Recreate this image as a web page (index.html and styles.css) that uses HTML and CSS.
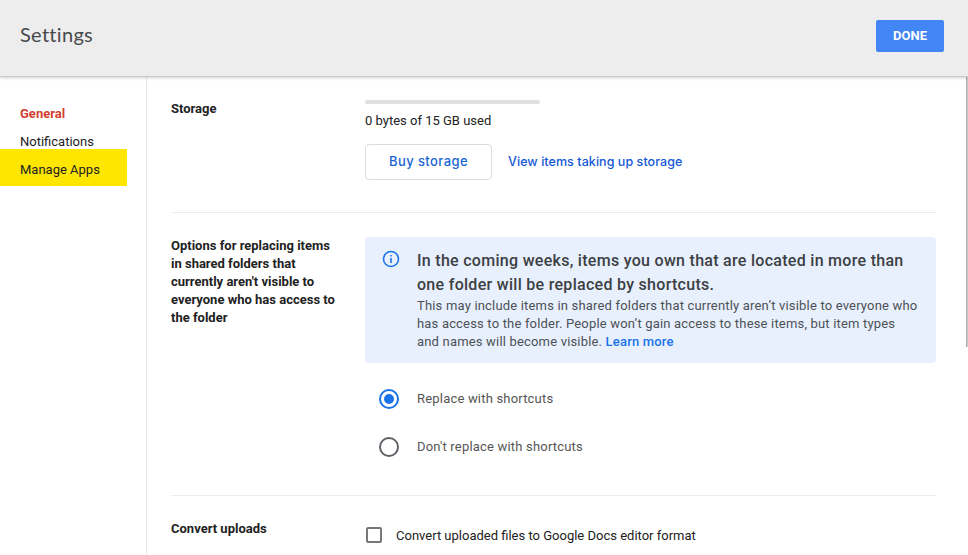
FILE: index.html
```html
<!DOCTYPE html>
<html lang="en">
<head>
<meta charset="utf-8">
<title>Settings</title>
<link rel="stylesheet" href="styles.css">
</head>
<body>
<header class="header">
  <h1 class="title">Settings</h1>
  <button class="done">DONE</button>
</header>
<div class="body">
  <nav class="nav">
    <a class="nav-item active"><span>General</span></a>
    <a class="nav-item"><span>Notifications</span></a>
    <a class="nav-item marked"><span>Manage Apps</span></a>
  </nav>
  <main class="content">
    <section class="row storage">
      <h2 class="label"><span>Storage</span></h2>
      <div class="field">
        <div class="meter"></div>
        <p class="usage"><span>0 bytes of 15 GB used</span></p>
        <div class="actions">
          <button class="buy"><span>Buy storage</span></button>
          <a class="view"><span>View items taking up storage</span></a>
        </div>
      </div>
    </section>
    <section class="row options">
      <h2 class="label">Options for replacing items<br>in shared folders that<br>currently aren't visible to<br>everyone who has access to<br>the folder</h2>
      <div class="field">
        <div class="notice">
          <svg class="info" width="18" height="18" viewBox="0 0 18 18" fill="none">
            <circle cx="9" cy="9" r="7.5" stroke="#1a73e8" stroke-width="1.6"/>
            <path d="M9 8v5M9 5v1.6" stroke="#1a73e8" stroke-width="1.6"/>
          </svg>
          <div class="notice-text">
            <h3 class="notice-title">In the coming weeks, items you own that are located in more than<br>one folder will be replaced by shortcuts.</h3>
            <p class="notice-copy">This may include items in shared folders that currently aren’t visible to everyone who<br>has access to the folder. People won’t gain access to these items, but item types<br>and names will become visible. <a class="learn">Learn more</a></p>
          </div>
        </div>
        <div class="radio checked"><i class="dot"></i><span>Replace with shortcuts</span></div>
        <div class="radio"><i class="dot"></i><span>Don't replace with shortcuts</span></div>
      </div>
    </section>
    <section class="row convert">
      <h2 class="label"><span>Convert uploads</span></h2>
      <div class="field check"><i class="box"></i><span>Convert uploaded files to Google Docs editor format</span></div>
    </section>
  </main>
  <div class="scroll"></div>
</div>
</body>
</html>
```

FILE: styles.css
```css
* { box-sizing: border-box; }
body {
  margin: 0;
  width: 968px;
  height: 555px;
  overflow: hidden;
  display: flex;
  flex-direction: column;
  background: #fff;
  color: #222;
  font: 13px/18px Roboto, "Liberation Sans", sans-serif;
}
h1, h2, h3, p { margin: 0; }
button { font: inherit; padding: 0; }
.header {
  position: relative;
  flex: none;
  height: 77px;
  padding: 0 24px 6px 20px;
  display: flex;
  align-items: center;
  justify-content: space-between;
  background: #ededed;
  border-bottom: 1px solid #cbcbcb;
  box-shadow: 0 1px 3px rgba(0, 0, 0, .18);
}
.title { margin-bottom: 2px; font: 400 20px/28px Lato, sans-serif; letter-spacing: .3px; color: #48494c; }
.done {
  width: 68px;
  height: 32px;
  margin-top: 2px;
  border: 0;
  border-radius: 2px;
  background: #4285f4;
  color: #fff;
  font-weight: 700;
}
.body { flex: 1; min-height: 0; display: flex; }
.nav { width: 147px; padding-top: 28px; border-right: 1px solid #e9e9e9; }
.nav-item { display: block; height: 28px; padding-left: 20px; }
.nav-item + .nav-item { height: 16px; }
.nav-item.active { color: #d23f31; font-weight: 700; }
.nav .marked { width: 127px; height: 37px; padding-top: 12px; background: #ffe600; color: #222; }
.content { width: 789px; padding-left: 24px; }
.row { display: flex; border-bottom: 1px solid #ebebeb; }
.label { width: 194px; flex: none; font: inherit; font-weight: 700; color: #222; }
.field { flex: 1; }
.storage { height: 136px; padding-top: 23px; }
.meter { width: 175px; height: 4px; border-radius: 2px; background: #e0e0e0; }
.usage { margin-top: 8px; }
.actions { display: flex; align-items: center; gap: 16px; margin-top: 14px; font: 500 13px/18px Inter, sans-serif; }
.buy { width: 127px; height: 36px; border: 1px solid #dadce0; border-radius: 4px; background: #fff; color: #1967d2; letter-spacing: .4px; padding-bottom: 2px; }
.view { color: #1558d6; font-size: 12.5px; letter-spacing: .06px; padding-bottom: 1px; white-space: nowrap; }
.options { height: 283px; padding-top: 24px; }
.notice { height: 126px; display: flex; padding: 12px 0 0 17px; border-radius: 4px; background: #e8f0fe; color: #5f6368; }
.info { margin: 1px 17px 0 0; flex: none; }
.notice-title { font: 500 16px/24px Roboto, sans-serif; letter-spacing: .29px; color: #3c4043; white-space: nowrap; }
.notice-copy { letter-spacing: .18px; color: #4d5156; white-space: nowrap; }
.learn { color: #1a73e8; font-weight: 500; }
.radio { display: flex; align-items: center; height: 48px; padding-left: 14px; gap: 18px; color: #555; letter-spacing: .19px; }
.notice + .radio { margin-top: 12px; }
.dot { width: 20px; height: 20px; display: grid; place-items: center; border: 2px solid #5f6368; border-radius: 50%; }
.checked .dot { border-color: #1a73e8; }
.checked .dot::after { content: ""; width: 10px; height: 10px; border-radius: 50%; background: #1a73e8; }
.convert { height: 70px; padding-top: 24px; }
.check { display: flex; gap: 14px; padding-top: 7px; }
.box { width: 16px; height: 16px; margin: 0 0 0 1px; border: 2px solid #777; border-radius: 2px; }
.scroll { width: 2px; height: 270px; margin-left: 30px; border-left: 1px solid #b0b0b0; background: #c8c8c8; }
```
